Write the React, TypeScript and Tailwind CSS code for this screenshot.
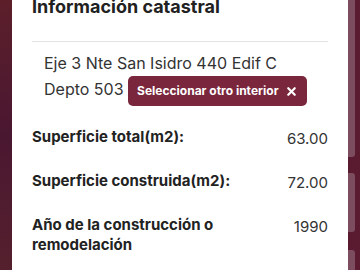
import { X } from 'lucide-react'

type Dato = {
  label: string
  value: string
}

const datos: Dato[] = [
  { label: 'Superficie total(m2):', value: '63.00' },
  { label: 'Superficie construida(m2):', value: '72.00' },
  { label: 'Año de la construcción o remodelación', value: '1990' },
  { label: 'Uso de suelo:', value: 'Habitacional' },
]

export default function App() {
  return (
    <div className="flex h-[270px] overflow-hidden bg-[#5a1a30] font-['Inter',sans-serif]">
      {/* fondo izquierdo */}
      <div className="w-3 shrink-0 bg-linear-to-b from-[#5c1f2a] via-[#4a1731] to-[#55202d]" />

      {/* tarjeta principal */}
      <div className="min-w-0 flex-1 bg-white px-5">
        <h2 className="-mt-[7px] text-lg leading-7 font-bold text-[#212121]">Información catastral</h2>
        <div className="mt-5 border-t border-[#e2e2e2]" />

        <p className="mt-2 px-3 text-base leading-[26px] text-[#333]">
          Eje 3 Nte San Isidro 440 Edif C Depto 503{' '}
          <button className="inline-flex h-[30px] items-center gap-1.5 rounded-[5px] bg-[#7a263c] px-[9px] align-middle text-xs font-bold text-white">
            Seleccionar otro interior
            <X size={13} strokeWidth={4} />
          </button>
        </p>

        <div className="mt-[21px] flex flex-col gap-[20px]">
          {datos.map(d => (
            <div key={d.label} className="flex items-start justify-between gap-2">
              <span className="w-[212px] text-[15px] leading-5 font-bold text-[#222]">{d.label}</span>
              <span className="shrink-0 text-right text-[15px] leading-6 text-[#333]">{d.value}</span>
            </div>
          ))}
        </div>
      </div>

      {/* fondo derecho con tarjetas detrás */}
      <div className="flex w-3 shrink-0 flex-col">
        <div className="h-[157px] w-[7px] shrink-0 rounded-br-[3px] bg-[#7c4d5f]" />
        <div className="mt-4 h-[59px] w-[7px] shrink-0 rounded-r-[3px] bg-[#7c4d5f]" />
        <div className="mt-[18px] h-[60px] w-[7px] shrink-0 rounded-tr-[3px] bg-[#7c4d5f]" />
      </div>
    </div>
  )
}
